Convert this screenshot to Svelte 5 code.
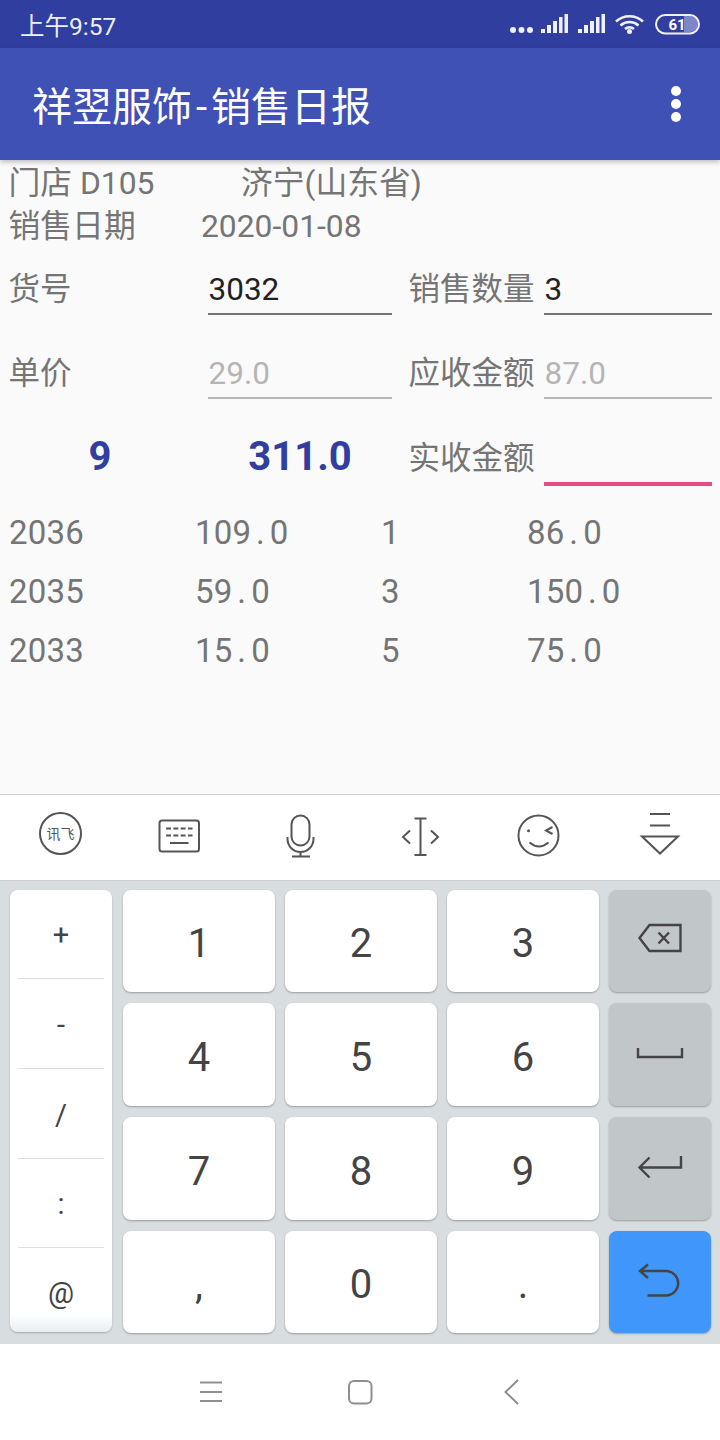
<script>
  const sales = [
    { no: '2036', price: '109.0', qty: '1', total: '86.0' },
    { no: '2035', price: '59.0', qty: '3', total: '150.0' },
    { no: '2033', price: '15.0', qty: '5', total: '75.0' }
  ];
  const sideKeys = ['+', '-', '/', ':', '@'];
  const digits = [
    ['1', '2', '3'],
    ['4', '5', '6'],
    ['7', '8', '9'],
    [',', '0', '.']
  ];
</script>

{#snippet mono(text)}
  <span>{#each text as ch}<i class="cell">{ch}</i>{/each}</span>
{/snippet}

<div class="phone">
  <div class="status-bar">
    <span class="time">上午9:57</span>
    <svg class="status-icons" width="210" height="48" viewBox="500 0 210 48">
      <g fill="#eef0fb">
        <circle cx="513" cy="30" r="3" />
        <circle cx="521.5" cy="30" r="3" />
        <circle cx="530" cy="30" r="3" />
        <rect x="541" y="29" width="4" height="4" />
        <rect x="547" y="25" width="4" height="8" />
        <rect x="553" y="21" width="4" height="12" />
        <rect x="559" y="17" width="3.500" height="16" />
        <rect x="564.500" y="14" width="3.500" height="19" />
        <rect x="578" y="29" width="4" height="4" />
        <rect x="584" y="25" width="4" height="8" />
        <rect x="590" y="21" width="4" height="12" />
        <rect x="596" y="17" width="3.500" height="16" />
        <rect x="601.500" y="14" width="3.500" height="19" />
        <circle cx="629.5" cy="31.5" r="2.5" />
      </g>
      <g fill="none" stroke="#eef0fb" stroke-width="2.6">
        <path d="M616 21.5a20 20 0 0 1 27 0" />
        <path d="M620.5 25.5a13.5 13.5 0 0 1 18 0" />
        <path d="M625 29a7 7 0 0 1 9 0" />
      </g>
      <path d="M684 16h6a8 8 0 0 1 0 16h-6z" fill="#7c87c9" />
      <rect x="656" y="15" width="43" height="18.500" rx="9.200" fill="none" stroke="#eef0fb" stroke-width="2" />
      <text x="677" y="30" class="battery-text">61</text>
    </svg>
  </div>

  <header class="app-bar">
    <h1>祥翌服饰<span class="dash">-</span>销售日报</h1>
    <div class="kebab"><i></i><i></i><i></i></div>
  </header>

  <main class="content">
    <div class="info-row">
      <span class="info-a">门店 D105</span>
      <span class="info-city">济宁(山东省)</span>
    </div>
    <div class="info-row">
      <span class="info-b">销售日期</span>
      <span>2020-01-08</span>
    </div>

    <div class="form">
      <span class="label">货号</span>
      <span class="field">3032</span>
      <span class="label right">销售数量</span>
      <span class="field">3</span>

      <span class="label">单价</span>
      <span class="field off">29.0</span>
      <span class="label right">应收金额</span>
      <span class="field off">87.0</span>

      <span class="sum count">9</span>
      <span class="sum">311.0</span>
      <span class="label right paid">实收金额</span>
      <span class="field focus"></span>
    </div>

    <div class="sales">
      {#each sales as row}
        <div class="sales-row">
          {@render mono(row.no)}
          {@render mono(row.price)}
          {@render mono(row.qty)}
          {@render mono(row.total)}
        </div>
      {/each}
    </div>
  </main>

  <div class="toolbar">
    <svg width="60" height="60" viewBox="30 807 60 60">
      <circle cx="60.500" cy="833.500" r="20.500" />
      <text x="60.500" y="838.500" class="logo-text">讯飞</text>
    </svg>
    <svg width="60" height="60" viewBox="150 807 60 60">
      <rect x="159.500" y="820.500" width="39.500" height="31" rx="2.500" />
      <path d="M166 828.500h26.500M166 835.500h26.500" stroke-dasharray="5 2.300" />
      <path d="M170 843h18.500" />
    </svg>
    <svg width="60" height="60" viewBox="270 807 60 60">
      <rect x="291.500" y="815.500" width="18" height="30" rx="9" />
      <path d="M287.500 837v2a13 13 0 0 0 26 0v-2M300.500 852v4.500M292 856.500h18" />
    </svg>
    <svg width="60" height="60" viewBox="390 807 60 60">
      <path d="M420.500 818.500v36.500M414.500 818.500h12M414.500 855h12M410 830.500l-7 6.500 7 6.500M431 830.500l7 6.500-7 6.500" />
    </svg>
    <svg width="60" height="60" viewBox="510 807 60 60">
      <circle cx="538.500" cy="835.500" r="20" />
      <circle cx="528.500" cy="830.700" r="1.500" class="solid" />
      <path d="M552.500 827l-6.500 3.500 6.500 3.500M529.500 842.500q9.500 8 19 0" />
    </svg>
    <svg width="60" height="60" viewBox="630 807 60 60">
      <path d="M650 814h20M650 825.500h20M642 836.500h36l-18 17z" />
    </svg>
  </div>

  <div class="keyboard">
    <div class="side-keys">
      {#each sideKeys as key}
        <div class="side-key">{key}</div>
      {/each}
    </div>

    <div class="digit-keys">
      {#each digits as row}
        {#each row as key}
          <div class="key">{key}</div>
        {/each}
      {/each}
    </div>

    <div class="action-keys">
      <div class="key action">
        <svg width="60" height="40" viewBox="630 921 60 40">
          <path d="M639.500 938l10-13h31v26h-31zM658.500 932.500l10.500 11M669 932.500l-10.500 11" />
        </svg>
      </div>
      <div class="key action">
        <svg width="60" height="40" viewBox="630 1034.500 60 40">
          <path d="M638 1047.500v9h44v-9" />
        </svg>
      </div>
      <div class="key action">
        <svg width="60" height="40" viewBox="630 1148.500 60 40">
          <path d="M681 1155.500v11.500h-41M649.500 1157l-10 10 10 10" />
        </svg>
      </div>
      <div class="key action blue">
        <svg width="60" height="40" viewBox="630 1262 60 40">
          <path d="M648 1264.500l-8 6.500 8 7M640 1271h27a12.300 12.300 0 0 1 0 24.500h-19.500" />
        </svg>
      </div>
    </div>
  </div>

  <nav class="nav-bar">
    <svg width="60" height="60" viewBox="180 1362 60 60">
      <path d="M200 1382.500h22M200 1392h22M200 1401h22" />
    </svg>
    <svg width="60" height="60" viewBox="330 1362 60 60">
      <rect x="349" y="1381" width="22.500" height="22.500" rx="5" />
    </svg>
    <svg width="60" height="60" viewBox="480 1362 60 60">
      <path d="M518 1380l-12.500 12 12.500 12" />
    </svg>
  </nav>
</div>

<style>
  :global(body) {
    margin: 0;
  }

  .phone {
    width: 720px;
    height: 1440px;
    display: flex;
    flex-direction: column;
    overflow: hidden;
    font-family: Roboto, "Noto Sans CJK SC", sans-serif;
    background: #fafafa;
  }

  .status-bar {
    height: 48px;
    flex: none;
    background: #303f9f;
    color: #eef0fb;
    display: flex;
    justify-content: space-between;
    align-items: center;
    padding: 0 10px 0 20px;
  }

  .time {
    font-size: 24.500px;
  }

  .battery-text {
    fill: #fff;
    font-size: 15px;
    font-weight: 700;
    text-anchor: middle;
  }

  .app-bar {
    height: 112px;
    flex: none;
    background: #3f51b5;
    color: #fff;
    display: flex;
    justify-content: space-between;
    align-items: center;
    padding: 0 39px 0 32px;
    box-shadow: 0 2px 5px rgba(0, 0, 0, 0.25);
    position: relative;
  }

  h1 {
    margin: 0;
    font-size: 40px;
    font-weight: 400;
  }

  .dash {
    margin: 0 4px;
  }

  .kebab {
    display: flex;
    flex-direction: column;
    gap: 3px;
  }

  .kebab i {
    width: 10px;
    height: 10px;
    border-radius: 50%;
    background: #fff;
  }

  .content {
    flex: 1;
    min-height: 0;
    color: #757575;
    font-size: 31.500px;
    padding-top: 2px;
  }

  .info-row {
    display: flex;
    height: 43px;
    line-height: 43px;
    padding-left: 8.500px;
    font-size: 31.800px;
  }

  .info-a {
    width: 232.500px;
  }

  .info-b {
    width: 192.500px;
  }

  .form {
    display: grid;
    grid-template-columns: 199px 184px 152px 168px;
    grid-auto-rows: 50px;
    row-gap: 34px;
    margin-top: 17px;
    padding-left: 8.500px;
    line-height: 50px;
  }

  .right {
    padding-left: 17px;
  }

  .field {
    color: #212121;
    border-bottom: 2px solid #757575;
    padding-left: 0.500px;
    box-sizing: border-box;
    height: 50px;
    margin-left: 0.500px;
  }

  .field.off {
    color: #b5b5b5;
    border-bottom-color: #b5b5b5;
  }

  .field.focus {
    border-bottom: 4px solid #e94c84;
    height: 53px;
  }

  .paid {
    padding-top: 1px;
  }

  .sum {
    color: #303f9f;
    font-size: 40px;
    font-weight: 700;
    text-align: center;
    line-height: 48px;
    padding-left: 1px;
  }

  .count {
    padding-right: 17px;
  }

  .sales {
    margin-top: 20px;
    padding-left: 9px;
    font-size: 33px;
  }

  .sales-row {
    display: grid;
    grid-template-columns: 186px 186px 146px 1fr;
    height: 59px;
    line-height: 59px;
  }

  .cell {
    display: inline-block;
    width: 18.700px;
    text-align: center;
    font-style: normal;
  }

  .toolbar {
    flex: none;
    display: grid;
    grid-template-columns: repeat(6, 120px);
    justify-items: center;
    padding-top: 12px;
    height: 73px;
    background: #fff;
    border-top: 1px solid #cfd2d3;
    border-bottom: 1px solid #c8cdcf;
  }

  .toolbar svg,
  .action svg,
  .nav-bar svg {
    fill: none;
    stroke: #555;
    stroke-width: 2;
  }

  .toolbar .solid {
    fill: #555;
    stroke: none;
  }

  .logo-text {
    fill: #555;
    stroke: none;
    font-size: 14px;
    text-anchor: middle;
  }

  .keyboard {
    height: 452px;
    flex: none;
    background: #d8dee0;
    display: grid;
    grid-template-columns: 102px 476px 103px;
    column-gap: 10px;
    padding: 9px 9px 2px 10px;
    color: #444;
  }

  .side-keys {
    height: 442px;
    background: linear-gradient(#fff 96%, #e9eef1);
    border-radius: 8px;
    box-shadow: 0 1px 2px rgba(0, 0, 0, 0.25);
    padding: 0 8px;
    display: grid;
    grid-template-rows: 89px 90px 90px 89px 84px;
    font-size: 29px;
  }

  .side-key {
    display: flex;
    align-items: center;
    justify-content: center;
    border-bottom: 1px solid #dcdfe0;
    padding-top: 2px;
  }

  .side-key:last-child {
    border-bottom: none;
    padding-top: 6px;
  }

  .digit-keys {
    display: grid;
    grid-template-columns: repeat(3, 152px);
    grid-template-rows: 102px 103px 103px 102px;
    gap: 11px 10px;
    margin-left: 1px;
  }

  .action-keys {
    display: grid;
    grid-template-rows: 102px 103px 103px 102px;
    row-gap: 11px;
    margin-left: 1px;
  }

  .key {
    background: #fff;
    border-radius: 8px;
    box-shadow: 0 1px 2px rgba(0, 0, 0, 0.3);
    display: flex;
    align-items: center;
    justify-content: center;
    font-size: 40px;
    padding-top: 5px;
  }

  .key.action {
    background: #c1c6c9;
    padding-top: 0;
  }

  .key.action svg {
    stroke: #444;
    stroke-width: 2.400;
  }

  .key.blue {
    background: #4096fb;
  }

  .nav-bar {
    height: 96px;
    box-sizing: border-box;
    flex: none;
    background: #fff;
    display: flex;
    justify-content: center;
    gap: 90px;
    padding-top: 18px;
  }

  .nav-bar svg {
    stroke: #8f8f8f;
  }
</style>
